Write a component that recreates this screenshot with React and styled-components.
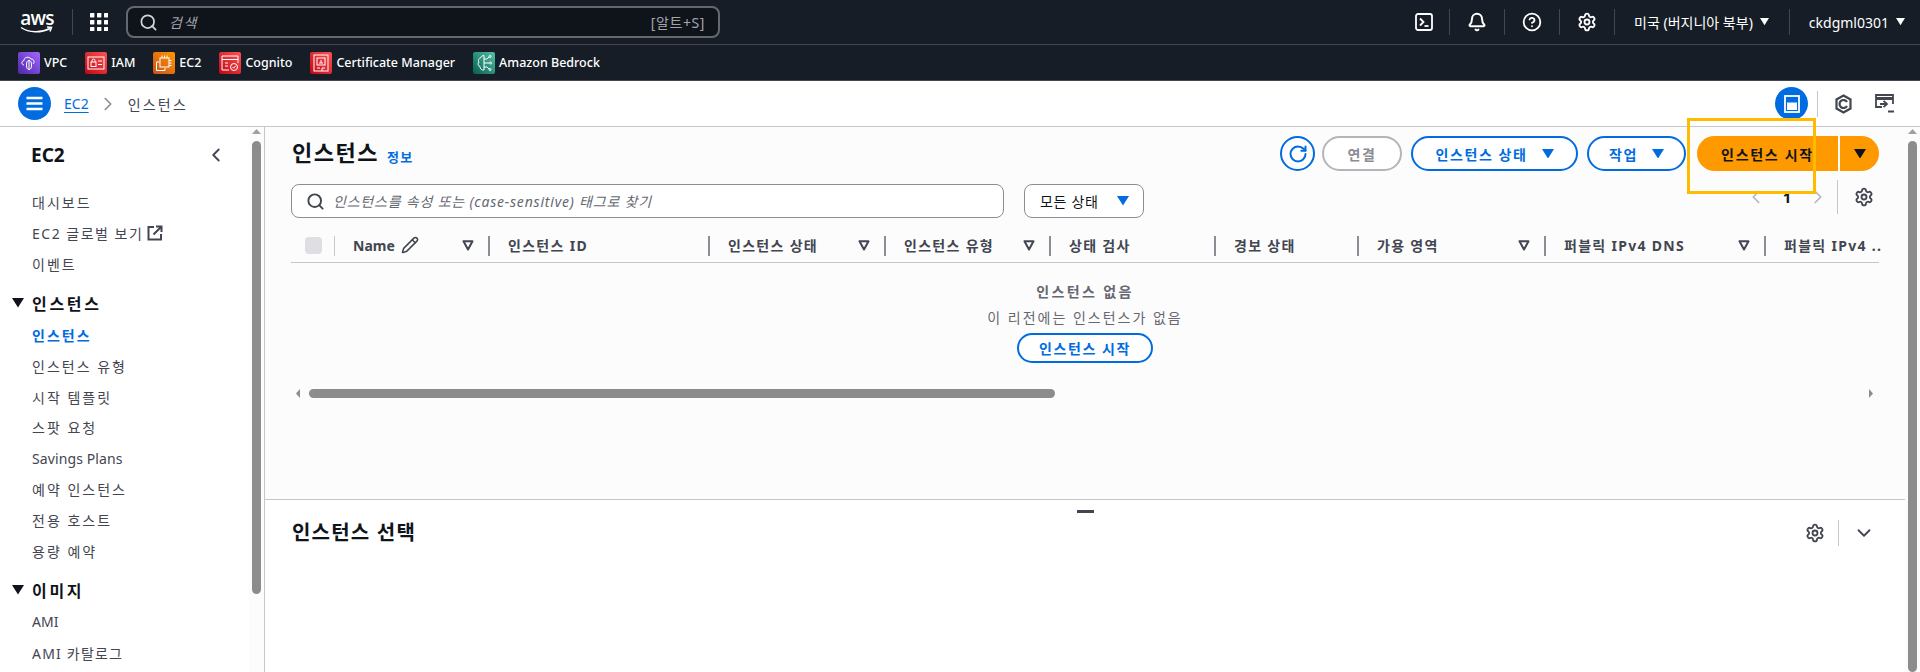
import styled, { createGlobalStyle } from "styled-components";
import { Bell, ChevronDown, ChevronLeft, ChevronRight, CircleHelp, Pencil, RotateCw, Search, Settings } from "lucide-react";

const GlobalStyle = createGlobalStyle`
  html, body {
    margin: 0;
    padding: 0;
    overflow: hidden;
    background: #ffffff;
    font-family: "Noto Sans", "Noto Sans CJK KR", sans-serif;
    font-size: 14px;
    color: #424650;
  }
  * { box-sizing: border-box; }
`;

const Page = styled.div`
  position: relative;
  width: 1920px;
  height: 672px;
  display: flex;
  flex-direction: column;
  overflow: hidden;
`;

/* top console header */
const TopBar = styled.header`
  height: 45px;
  flex: none;
  display: flex;
  align-items: center;
  background: #161d26;
  border-bottom: 1px solid #424650;
  color: #ffffff;
  padding-left: 20px;
`;

const Logo = styled.div`
  width: 34px;
  height: 24px;
  position: relative;
  display: flex;
  justify-content: center;
  font-family: "Open Sans", sans-serif;
  font-size: 19px;
  font-weight: 600;
  line-height: 17px;
  letter-spacing: -0.8px;
  svg { position: absolute; left: 0; bottom: 0; }
`;

const BarDivider = styled.span`
  flex: none;
  width: 1px;
  height: 26px;
  background: #424650;
  margin: ${({ $margin }) => $margin || "0"};
`;

const SearchBox = styled.div`
  width: 594px;
  height: 32px;
  margin-left: 18px;
  display: flex;
  align-items: center;
  padding: 0 13px 0 11px;
  background: #0f141a;
  border: 2px solid #656871;
  border-radius: 8px;
  color: #d1d5db;
`;

const SearchHint = styled.span`
  margin-left: 11px;
  font-style: italic;
  color: #a4a4ad;
  letter-spacing: 1.5px;
`;

const ShortCut = styled.span`
  margin-left: auto;
  color: #a4a4ad;
  font-size: 14px;
  letter-spacing: 0.6px;
`;

const TopIcons = styled.div`
  margin-left: auto;
  display: flex;
  align-items: center;
  height: 100%;
`;

const TopIcon = styled.span`
  display: flex;
  width: 54px;
  justify-content: center;
  padding-left: ${({ $nudge }) => $nudge || 0}px;
  color: #ffffff;
`;

const MenuText = styled.span`
  display: flex;
  align-items: center;
  gap: 7px;
  font-size: 14px;
  white-space: nowrap;
  padding: ${({ $padding }) => $padding};
`;

const FavBar = styled.nav`
  height: 36px;
  flex: none;
  display: flex;
  align-items: center;
  padding-left: 18px;
  background: #161d26;
  border-bottom: 1px solid #424650;
  gap: 18px;
`;

const Fav = styled.span`
  display: flex;
  align-items: center;
  gap: 4px;
  color: #ffffff;
  font-size: 12.5px;
  font-weight: 500;
  white-space: nowrap;
`;

/* breadcrumbs row */
const CrumbBar = styled.div`
  height: 46px;
  flex: none;
  display: flex;
  align-items: center;
  padding-left: 18px;
  background: #ffffff;
  border-bottom: 1px solid #c6c6cd;
`;

const RoundIcon = styled.span`
  width: 33px;
  height: 33px;
  flex: none;
  display: flex;
  align-items: center;
  justify-content: center;
  border-radius: 50%;
  background: #006ce0;
  color: #ffffff;
`;

const CrumbLink = styled.a`
  margin-left: 13px;
  color: #006ce0;
  text-decoration: underline;
  text-underline-offset: 3px;
`;

const CrumbCurrent = styled.span`
  margin-left: 1px;
  color: #424650;
  letter-spacing: 2.2px;
`;

const CrumbTools = styled.div`
  margin-left: auto;
  display: flex;
  align-items: center;
  padding-right: 25px;
  color: #424650;
`;

const Body = styled.div`
  flex: 1;
  min-height: 0;
  display: flex;
`;

/* left navigation */
const Side = styled.aside`
  width: 265px;
  flex: none;
  display: flex;
  border-right: 1px solid #c6c6cd;
`;

const SideInner = styled.div`
  width: 249px;
  flex: none;
  padding: 16px 0 0 32px;
  overflow: hidden;
`;

const SideTitle = styled.div`
  height: 24px;
  display: flex;
  align-items: center;
  justify-content: space-between;
  padding-right: 22px;
  margin-bottom: 20px;
  margin-left: -1px;
  font-size: 19px;
  font-weight: 700;
  color: #0f141a;
`;

const SideItem = styled.div`
  height: 30.85px;
  display: flex;
  align-items: center;
  gap: 4px;
  white-space: nowrap;
  color: ${({ $active }) => ($active ? "#006ce0" : "#424650")};
  font-weight: ${({ $active }) => ($active ? 700 : 400)};
  letter-spacing: ${({ $spacing }) => $spacing || "2px"};
`;

const SideGroup = styled.div`
  height: 32px;
  margin-top: 8px;
  margin-left: -20px;
  padding-bottom: 1px;
  display: flex;
  align-items: center;
  gap: 8px;
  font-size: 16px;
  font-weight: 700;
  color: #0f141a;
  letter-spacing: 2.7px;
`;

const VTrack = styled.div`
  width: 15px;
  flex: none;
  display: flex;
  flex-direction: column;
  align-items: center;
  padding-top: 2px;
  background: #fcfcfc;
`;

const VThumb = styled.div`
  width: 9px;
  margin-top: 7px;
  height: ${({ $height }) => $height}px;
  background: #8c8c8c;
  border-radius: 5px;
`;

/* main content */
const Main = styled.main`
  flex: 1;
  min-width: 0;
  display: flex;
`;

const MainInner = styled.div`
  width: 1640px;
  flex: none;
  display: flex;
  flex-direction: column;
`;

const TablePanel = styled.section`
  height: 373px;
  flex: none;
  padding: 9px 26px 0;
  background: #fcfcfc;
  border-bottom: 1px solid #c6c6cd;
`;

const HeadRow = styled.div`
  display: flex;
  align-items: center;
  height: 35px;
`;

const PageTitle = styled.h1`
  margin: 0 0 2px 1px;
  font-size: 22px;
  font-weight: 700;
  letter-spacing: 1.5px;
  line-height: 35px;
  color: #0f141a;
`;

const InfoLink = styled.a`
  margin: 6px 0 0 8px;
  font-size: 13px;
  font-weight: 700;
  letter-spacing: 1.3px;
  color: #006ce0;
`;

const Actions = styled.div`
  margin-left: auto;
  display: flex;
  align-items: center;
`;

const Btn = styled.button`
  height: ${({ $height }) => $height || 35}px;
  width: ${({ $width }) => $width}px;
  margin-left: ${({ $gap }) => $gap || 0}px;
  padding: 0;
  display: flex;
  align-items: center;
  justify-content: center;
  gap: 14px;
  font-family: inherit;
  font-size: 14px;
  font-weight: 700;
  letter-spacing: 1.6px;
  background: #ffffff;
  color: ${({ $disabled }) => ($disabled ? "#8c8c94" : "#006ce0")};
  border: 2px solid ${({ $disabled }) => ($disabled ? "#b4b4bb" : "#006ce0")};
  border-radius: 20px;
`;

const PrimaryBtn = styled.button`
  height: 35px;
  width: ${({ $width }) => $width}px;
  margin-left: ${({ $gap }) => $gap || 0}px;
  padding: 0;
  display: flex;
  align-items: center;
  justify-content: center;
  border: none;
  background: #ff9900;
  color: #0f141a;
  font-family: inherit;
  font-size: 14px;
  font-weight: 700;
  letter-spacing: 1.7px;
  border-radius: ${({ $side }) => ($side === "left" ? "20px 0 0 20px" : "0 20px 20px 0")};
`;

const FilterRow = styled.div`
  display: flex;
  height: 34px;
  margin-top: 13px;
`;

const FilterInput = styled.div`
  width: 713px;
  display: flex;
  align-items: center;
  gap: 8px;
  padding-left: 14px;
  background: #ffffff;
  border: 1px solid #8c8c94;
  border-radius: 8px;
  color: #424650;
`;

const Placeholder = styled.span`
  font-style: italic;
  color: #656871;
  letter-spacing: 0.8px;
`;

const SelectBox = styled.div`
  width: 120px;
  margin-left: 20px;
  display: flex;
  align-items: center;
  gap: 18px;
  padding-left: 15px;
  background: #ffffff;
  border: 1px solid #8c8c94;
  border-radius: 8px;
  color: #0f141a;
  letter-spacing: 0.7px;
`;

const Pager = styled.div`
  margin: -4px 0 0 auto;
  height: 34px;
  display: flex;
  align-items: center;
  color: #b4b4bb;
`;

const PageNum = styled.span`
  width: 40px;
  text-align: center;
  color: #0f141a;
  font-weight: 700;
  font-size: 15px;
`;

const PagerLine = styled.span`
  width: 1px;
  height: 34px;
  background: #c6c6cd;
  margin: 0 16px 0 8px;
`;

const TableHead = styled.div`
  margin-top: 18px;
  height: 27px;
  display: grid;
  grid-template-columns: 43px 154px 220px 176px 165px 165px 143px 187px 220px 115px;
  border-bottom: 1px solid #c6c6cd;
`;

const CheckCell = styled.div`
  padding-left: 14px;
  position: relative;
`;

const CheckBox = styled.span`
  display: block;
  width: 17px;
  height: 17px;
  margin-top: 1px;
  background: #dedee3;
  border-radius: 4px;
`;

const HeadCell = styled.div`
  height: 20px;
  display: flex;
  align-items: center;
  padding: 0 14px 2px 18px;
  border-left: ${({ $light }) => ($light ? "1px solid #c6c6cd" : "2px solid #8c8c94")};
  font-size: 14px;
  font-weight: 700;
  color: #424650;
  white-space: nowrap;
  letter-spacing: ${({ $latin }) => ($latin ? "0" : "1.3px")};
`;

const SortMark = styled.svg`
  margin-left: auto;
  flex: none;
`;

const Empty = styled.div`
  padding-top: 19px;
  display: flex;
  flex-direction: column;
  align-items: center;
  color: #656871;
`;

const EmptyTitle = styled.div`
  line-height: 20px;
  font-weight: 700;
  letter-spacing: 2.4px;
`;

const EmptyText = styled.div`
  line-height: 20px;
  margin: 6px 0 5px;
  letter-spacing: 2px;
`;

const HTrack = styled.div`
  margin-top: 26px;
  height: 9px;
  display: flex;
  align-items: center;
  padding: 0 6px 0 5px;
`;

const HThumb = styled.div`
  width: 746px;
  height: 9px;
  margin-left: 9px;
  background: #8c8c8c;
  border-radius: 5px;
`;

const Arrow = styled.svg`
  flex: none;
  margin-left: ${({ $auto }) => ($auto ? "auto" : "0")};
`;

const SplitPanel = styled.section`
  flex: 1;
  padding: 0 26px;
  background: #ffffff;
`;

const Handle = styled.div`
  width: 17px;
  height: 3px;
  margin: 10px auto 0;
  background: #424650;
`;

const SplitHead = styled.div`
  height: 28px;
  margin-top: 6px;
  display: flex;
  align-items: center;
`;

const SplitTitle = styled.h2`
  margin: 0 0 4px 1px;
  font-size: 20px;
  font-weight: 700;
  letter-spacing: 1.2px;
  color: #0f141a;
`;

const SplitTools = styled.div`
  margin-left: auto;
  display: flex;
  align-items: center;
  padding-right: 4px;
  color: #424650;
`;

const ToolLine = styled.span`
  width: 1px;
  height: 26px;
  background: #c6c6cd;
  margin: 0 14px 0 13px;
`;

/* yellow marker drawn over the screenshot */
const Highlight = styled.div`
  position: absolute;
  left: 1687px;
  top: 118px;
  width: 129px;
  height: 76px;
  border: 3px solid #ffbb00;
  pointer-events: none;
`;

function Caret({ size = 10, color = "currentColor" }) {
  return (
    <svg width={size} height={size * 0.8} viewBox="0 0 10 8">
      <polygon points="0,0 10,0 5,8" fill={color} />
    </svg>
  );
}

function Sort() {
  return (
    <SortMark width="12" height="11" viewBox="0 0 12 11">
      <polygon points="1.5,1.2 10.5,1.2 6,9.5" fill="none" stroke="#424650" strokeWidth="2" strokeLinejoin="round" />
    </SortMark>
  );
}

const SERVICE_COLORS = {
  purple: ["#4d27a8", "#a166ff"],
  red: ["#bd0816", "#ff5252"],
  orange: ["#c8511b", "#ff9900"],
  teal: ["#055f4e", "#56c0a7"],
};

function ServiceIcon({ id, tone, children }) {
  const [from, to] = SERVICE_COLORS[tone];
  return (
    <svg width="22" height="22" viewBox="0 0 22 22">
      <defs>
        <linearGradient id={id} x1="0" y1="1" x2="1" y2="0">
          <stop offset="0" stopColor={from} />
          <stop offset="1" stopColor={to} />
        </linearGradient>
      </defs>
      <rect width="22" height="22" rx="2" fill={`url(#${id})`} />
      <g fill="none" stroke="#fff" strokeWidth="1">
        {children}
      </g>
    </svg>
  );
}

function CloudShell() {
  return (
    <svg width="18" height="18" viewBox="0 0 18 18" fill="none" stroke="#fff" strokeWidth="1.8">
      <rect x="1" y="1" width="16" height="16" rx="2" />
      <path d="M5 5.5 8.5 9 5 12.5" />
      <path d="M9.5 13h4" />
    </svg>
  );
}

function AppsGrid() {
  const cells = [0, 7, 14];
  return (
    <svg width="18" height="18" viewBox="0 0 18 18" fill="#fff">
      {cells.map((y) => cells.map((x) => <rect key={`${x}-${y}`} x={x} y={y} width="4.4" height="4.4" rx="0.6" />))}
    </svg>
  );
}

function MenuIcon() {
  return (
    <svg width="17" height="15" viewBox="0 0 17 15" fill="none" stroke="#fff" strokeWidth="2.4">
      <path d="M0.5 2h16M0.5 7.5h16M0.5 13h16" />
    </svg>
  );
}

function ExternalIcon() {
  return (
    <svg width="16" height="16" viewBox="0 0 16 16" fill="none" stroke="#424650" strokeWidth="2">
      <path d="M7 2H1.5v12.5H14V9" />
      <path d="M6.5 9.5 14 2M9 1.5h5.5V7" />
    </svg>
  );
}

export default function App() {
  return (
    <Page>
      <GlobalStyle />
      <TopBar>
        <Logo>
          aws
          <svg width="34" height="8" viewBox="0 0 34 8" fill="none" stroke="#fff" strokeWidth="1.5">
            <path d="M1 1.5c8 5.5 20 5.5 29 1M27 1l4.5 0.5-1.5 4" />
          </svg>
        </Logo>
        <BarDivider $margin="0 17px 0 18px" />
        <AppsGrid />
        <SearchBox>
          <Search size={19} strokeWidth={2.2} />
          <SearchHint>검색</SearchHint>
          <ShortCut>[알트+S]</ShortCut>
        </SearchBox>
        <TopIcons>
          <TopIcon $nudge={4}><CloudShell /></TopIcon>
          <BarDivider />
          <TopIcon><Bell size={20} strokeWidth={2.4} /></TopIcon>
          <BarDivider />
          <TopIcon><CircleHelp size={20} strokeWidth={2.2} /></TopIcon>
          <BarDivider />
          <TopIcon><Settings size={20} strokeWidth={2.2} /></TopIcon>
          <BarDivider />
          <MenuText $padding="0 20px 0 19px">
            미국 (버지니아 북부) <Caret size={9} />
          </MenuText>
          <BarDivider />
          <MenuText $padding="0 15px 0 19px">
            ckdgml0301 <Caret size={9} />
          </MenuText>
        </TopIcons>
      </TopBar>

      <FavBar>
        <Fav>
          <ServiceIcon id="fav-vpc" tone="purple">
            <path d="M6 13c-2.500 0-3-4 0-4.500C6 5 11 4 13 7c3 0 4 3 2 5" />
            <ellipse cx="11" cy="13" rx="2.500" ry="4.500" />
            <path d="M11 8.500v9" />
          </ServiceIcon>
          VPC
        </Fav>
        <Fav>
          <ServiceIcon id="fav-iam" tone="red">
            <rect x="3" y="5" width="16" height="12" />
            <rect x="6" y="10" width="5" height="4.500" />
            <path d="M7 10V8.500a1.500 1.500 0 0 1 3 0V10M13 9h4M13 12.500h4" />
          </ServiceIcon>
          IAM
        </Fav>
        <Fav>
          <ServiceIcon id="fav-ec2" tone="orange">
            <rect x="7" y="6" width="9" height="9" />
            <path d="M6 10H3.500v8.500H12V16M9 6V3.500M11.500 6V3.500M14 6V3.500M16 8.500h2.500M16 11h2.500M16 13.500h2.500" />
          </ServiceIcon>
          EC2
        </Fav>
        <Fav>
          <ServiceIcon id="fav-cog" tone="red">
            <path d="M10 18H3V4h16v7M3 7.500h16M6 11h3M6 14h3" />
            <circle cx="15" cy="15" r="3.500" />
            <path d="M13.500 15l1.200 1.200 2-2.400" />
          </ServiceIcon>
          Cognito
        </Fav>
        <Fav>
          <ServiceIcon id="fav-acm" tone="red">
            <rect x="4" y="3" width="14" height="16" />
            <rect x="7" y="6" width="8" height="7" />
            <path d="M11 8v3M9 11h4M7 16h3M12 19v-3h3" />
          </ServiceIcon>
          Certificate Manager
        </Fav>
        <Fav>
          <ServiceIcon id="fav-bed" tone="teal">
            <path d="M11 3.500C8 3.500 7.500 6 7.500 6 5 6.500 5 9 6 10c-1.500 1.500-1 4 1 4.500 0 2.500 2 4 4 3.500V3.500Z" />
            <path d="M11 7h3l2-2M11 11h5M11 15h3l2 2" />
            <circle cx="17" cy="4.500" r="1" />
            <circle cx="17.500" cy="11" r="1" />
            <circle cx="17" cy="17.500" r="1" />
          </ServiceIcon>
          Amazon Bedrock
        </Fav>
      </FavBar>

      <CrumbBar>
        <RoundIcon><MenuIcon /></RoundIcon>
        <CrumbLink>EC2</CrumbLink>
        <ChevronRight size={22} strokeWidth={1.8} color="#8c8c94" style={{ margin: "0 8px 0 8px" }} />
        <CrumbCurrent>인스턴스</CrumbCurrent>
        <CrumbTools>
          <RoundIcon>
            <svg width="16" height="18" viewBox="0 0 16 18" fill="none" stroke="#fff" strokeWidth="1.800">
              <rect x="1" y="1" width="14" height="16" />
              <rect x="3" y="7.500" width="10" height="7.500" fill="#fff" stroke="none" />
            </svg>
          </RoundIcon>
          <BarDivider $margin="0 17px 0 9px" style={{ background: "#c6c6cd" }} />
          <svg width="17" height="20" viewBox="0 0 17 20" fill="none" stroke="#424650" strokeWidth="2.200">
            <path d="M8.500 1.500 15.500 5.500v9l-7 4-7-4v-9z" />
            <path d="M12 8a4 4 0 1 0 0 4" />
          </svg>
          <svg width="20" height="20" viewBox="0 0 20 20" fill="none" stroke="#424650" strokeWidth="1.800" style={{ marginLeft: 23 }}>
            <path d="M7 13H1V1h17v9" />
            <path d="M1 4.500h17" strokeWidth="3" />
            <path d="M5 10h6M8.500 6.800 12 10l-3.500 3.200" />
            <path d="M13 17.500h6" strokeWidth="2" />
          </svg>
        </CrumbTools>
      </CrumbBar>

      <Body>
        <Side>
          <SideInner>
            <SideTitle>
              EC2
              <ChevronLeft size={22} strokeWidth={2} color="#424650" />
            </SideTitle>
            <SideItem>대시보드</SideItem>
            <SideItem $spacing="1.5px">EC2 글로벌 보기 <ExternalIcon /></SideItem>
            <SideItem>이벤트</SideItem>
            <SideGroup><Caret size={12} color="#0f141a" /> 인스턴스</SideGroup>
            <SideItem $active>인스턴스</SideItem>
            <SideItem>인스턴스 유형</SideItem>
            <SideItem>시작 템플릿</SideItem>
            <SideItem>스팟 요청</SideItem>
            <SideItem $spacing="0.1px">Savings Plans</SideItem>
            <SideItem>예약 인스턴스</SideItem>
            <SideItem>전용 호스트</SideItem>
            <SideItem>용량 예약</SideItem>
            <SideGroup><Caret size={12} color="#0f141a" /> 이미지</SideGroup>
            <SideItem $spacing="0.1px">AMI</SideItem>
            <SideItem $spacing="1.2px">AMI 카탈로그</SideItem>
          </SideInner>
          <VTrack>
            <Arrow width="9" height="5" viewBox="0 0 9 5"><polygon points="0,5 9,5 4.500,0" fill="#a0a0a0" /></Arrow>
            <VThumb $height={453} />
          </VTrack>
        </Side>

        <Main>
          <MainInner>
            <TablePanel>
              <HeadRow>
                <PageTitle>인스턴스</PageTitle>
                <InfoLink>정보</InfoLink>
                <Actions>
                  <Btn $width={35} aria-label="새로 고침"><RotateCw size={20} strokeWidth={2.4} /></Btn>
                  <Btn $width={80} $gap={7} $disabled>연결</Btn>
                  <Btn $width={167} $gap={9}>인스턴스 상태 <Caret size={12} /></Btn>
                  <Btn $width={99} $gap={9}>작업 <Caret size={12} /></Btn>
                  <PrimaryBtn $width={141} $gap={11} $side="left">인스턴스 시작</PrimaryBtn>
                  <PrimaryBtn $width={39} $gap={2} $side="right"><Caret size={12} color="#0f141a" /></PrimaryBtn>
                </Actions>
              </HeadRow>

              <FilterRow>
                <FilterInput>
                  <Search size={19} strokeWidth={2.4} />
                  <Placeholder>인스턴스를 속성 또는 (case-sensitive) 태그로 찾기</Placeholder>
                </FilterInput>
                <SelectBox>
                  모든 상태 <Caret size={12} color="#006ce0" />
                </SelectBox>
                <Pager>
                  <ChevronLeft size={22} strokeWidth={1.8} />
                  <PageNum>1</PageNum>
                  <ChevronRight size={22} strokeWidth={1.8} />
                  <PagerLine />
                  <Settings size={20} strokeWidth={2.2} color="#424650" style={{ marginRight: 5 }} />
                </Pager>
              </FilterRow>

              <TableHead>
                <CheckCell><CheckBox /></CheckCell>
                <HeadCell $light $latin>Name <Pencil size={18} strokeWidth={2} style={{ marginLeft: 6 }} /><Sort /></HeadCell>
                <HeadCell>인스턴스 ID</HeadCell>
                <HeadCell>인스턴스 상태<Sort /></HeadCell>
                <HeadCell>인스턴스 유형<Sort /></HeadCell>
                <HeadCell>상태 검사</HeadCell>
                <HeadCell>경보 상태</HeadCell>
                <HeadCell>가용 영역<Sort /></HeadCell>
                <HeadCell>퍼블릭 IPv4 DNS<Sort /></HeadCell>
                <HeadCell style={{ paddingRight: 0 }}>퍼블릭 IPv4 ..</HeadCell>
              </TableHead>

              <Empty>
                <EmptyTitle>인스턴스 없음</EmptyTitle>
                <EmptyText>이 리전에는 인스턴스가 없음</EmptyText>
                <Btn $width={136} $height={30}>인스턴스 시작</Btn>
              </Empty>

              <HTrack>
                <Arrow width="4" height="9" viewBox="0 0 4 9"><polygon points="4,0 4,9 0,4.500" fill="#8c8c8c" /></Arrow>
                <HThumb />
                <Arrow $auto width="4" height="9" viewBox="0 0 4 9"><polygon points="0,0 0,9 4,4.500" fill="#8c8c8c" /></Arrow>
              </HTrack>
            </TablePanel>

            <SplitPanel>
              <Handle />
              <SplitHead>
                <SplitTitle>인스턴스 선택</SplitTitle>
                <SplitTools>
                  <Settings size={20} strokeWidth={2.2} />
                  <ToolLine />
                  <ChevronDown size={22} strokeWidth={2} />
                </SplitTools>
              </SplitHead>
            </SplitPanel>
          </MainInner>
          <VTrack>
            <Arrow width="9" height="5" viewBox="0 0 9 5"><polygon points="0,5 9,5 4.500,0" fill="#a0a0a0" /></Arrow>
            <VThumb $height={540} />
          </VTrack>
        </Main>
      </Body>

      <Highlight />
    </Page>
  );
}
